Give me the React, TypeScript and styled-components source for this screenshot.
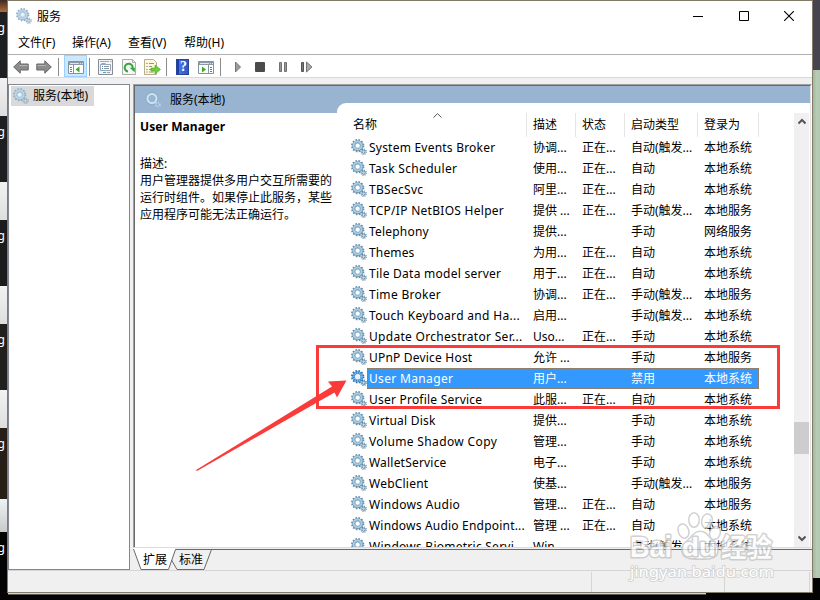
import React from 'react';
import styled, { createGlobalStyle, css } from 'styled-components';

const Global = createGlobalStyle`
  *, *::before, *::after { box-sizing: border-box; }
  html, body { margin: 0; padding: 0; overflow: hidden; background: #000; }
  body {
    font-family: "Noto Sans", "Noto Sans CJK SC", sans-serif;
    font-size: 12px;
    line-height: 17px;
    color: #000;
  }
  svg { display: block; flex: none; }
`;

const Desktop = styled.div`
  position: relative;
  display: grid;
  grid-template-columns: 7px 806px 7px;
  grid-template-rows: 593px 7px;
  width: 820px;
  height: 600px;
  overflow: hidden;
  background: #030303;
`;

const LeftEdge = styled.div`
  display: flex;
  flex-direction: column;
  overflow: hidden;
`;

const Strip = styled.div<{ $h: number; $bg: string }>`
  height: ${p => p.$h}px;
  flex: none;
  background: ${p => p.$bg};
  color: #fff;
  display: flex;
  justify-content: flex-end;
  padding: 7px 2px 0 0;
  line-height: 17px;
  overflow: hidden;
`;

const RightEdge = styled.div`
  display: grid;
  grid-template-rows: 70px 508px 15px;
`;
const Slate = styled.div`background: #45444f;`;
const Green = styled.div`background: linear-gradient(90deg, #a2b89f, #b5cbb2 50%, #b3c8b0);`;

const BottomEdge = styled.div`
  grid-column: 2;
  height: 2px;
  width: 698px;
  margin-left: 1px;
  background: #d4d4d4;
  border-bottom: 1px solid #55555c;
`;

const Window = styled.div`
  display: flex;
  flex-direction: column;
  border: 1px solid #857a68;
  background: #f0f0f0;
  overflow: hidden;
`;

const TitleBar = styled.div`
  height: 30px;
  flex: none;
  display: flex;
  align-items: center;
  padding-left: 8px;
  background: #fff;
`;
const Title = styled.span`
  flex: 1;
  padding-left: 5px;
`;
const Caption = styled.button`
  width: 45.5px;
  height: 28px;
  border: 0;
  padding: 0;
  background: none;
  display: flex;
  align-items: center;
  justify-content: center;
`;

const MenuBar = styled.div`
  height: 24px;
  flex: none;
  display: flex;
  gap: 16px;
  padding: 3px 0 0 10px;
  background: #fff;
  border-bottom: 1px solid #b0b0b0;
`;
const MenuItem = styled.span<{ $w: number }>`
  width: ${p => p.$w}px;
  white-space: nowrap;
`;

const ToolBar = styled.div`
  height: 23px;
  flex: none;
  display: flex;
  align-items: center;
  background: #fff;
  border-bottom: 1px solid #d9d9d9;
`;
const Tool = styled.div<{ $w: number; $active?: boolean }>`
  width: ${p => p.$w}px;
  height: 22px;
  padding-top: 2px;
  display: flex;
  align-items: center;
  justify-content: center;
  ${p => p.$active && css`
    background: #cce8ff;
    border: 1px solid #99d1ff;
    padding-top: 2px;
  `}
`;
const Divider = styled.div<{ $l: number; $r: number }>`
  width: 1px;
  height: 18px;
  margin: 2px ${p => p.$r}px 0 ${p => p.$l}px;
  background: #8c8c8c;
`;

const Body = styled.div`
  height: 486px;
  flex: none;
  margin-top: 6px;
  display: flex;
`;
const Tree = styled.div`
  width: 122px;
  border: 1px solid #828790;
  background: #fff;
  padding: 1px 2px;
`;
const TreeItem = styled.div`
  width: 83px;
  height: 20px;
  display: flex;
  align-items: center;
  gap: 4px;
  padding: 0 0 1px 2px;
  background: #d9d9d9;
  white-space: nowrap;
`;

const Right = styled.div`
  width: 679px;
  margin-left: 3px;
  display: flex;
  flex-direction: column;
`;
const Pane = styled.div`
  height: 464px;
  border: 1px solid #a0a0a0;
  border-right-color: #fff;
  border-bottom-color: #dcdcdc;
`;
const PaneInner = styled.div`
  height: 462px;
  border: 1px solid #696969;
  border-right-color: #e3e3e3;
  border-bottom: 0;
  display: grid;
  grid-template-columns: 202px 473px;
  background: #fff;
`;
const Detail = styled.div`
  display: flex;
  flex-direction: column;
`;
const Banner = styled.div`
  height: 27px;
  display: flex;
  align-items: center;
  gap: 9px;
  padding-left: 10px;
  background: #99b4d1;
`;
const ServiceName = styled.div`
  padding: 5px 5px 0;
  font-weight: 700;
  letter-spacing: 0.08px;
`;
const Description = styled.div`
  padding: 20px 0 0 5px;
  white-space: nowrap;
`;
const ListSide = styled.div`
  background: #99b4d1;
  padding-top: 17px;
  overflow: hidden;
`;
const Card = styled.div`
  height: 444px;
  border-top-left-radius: 9px;
  background: #fff;
  display: flex;
  padding: 10px 1px 0 14px;
`;
const List = styled.div`
  width: 443px;
  height: 434px;
  overflow: hidden;
`;
const Header = styled.div`
  position: relative;
  display: grid;
  grid-template-columns: 176px 49px 49px 73px 61px;
  height: 24px;
`;
const HeaderCell = styled.div<{ $first?: boolean }>`
  height: 24px;
  padding: 3px 0 0 ${p => (p.$first ? 2 : 6)}px;
  border-right: 1px solid #e5e5e5;
`;
const SortMark = styled.div`
  position: absolute;
  left: 82px;
  top: 0;
`;
const Row = styled.div`
  display: grid;
  grid-template-columns: 16px 392px;
  height: 21px;
`;
const IconCell = styled.div`padding-top: 2px;`;
const Cells = styled.div<{ $selected?: boolean }>`
  display: grid;
  grid-template-columns: 160px 49px 49px 73px 61px;
  height: 21px;
  line-height: 22px;
  white-space: nowrap;
  outline-offset: -1px;
  ${p => p.$selected && css`
    background: #3399ff;
    color: #fff;
    outline: 1px dotted rgba(204, 102, 0, 0.6);
  `}
`;
const Name = styled.span<{ $ls: number }>`
  padding-left: 2px;
  letter-spacing: ${p => p.$ls}px;
`;
const Cell = styled.span`padding-left: 6px;`;

const ScrollBar = styled.div`
  width: 15px;
  height: 434px;
  background: #f0f0f0;
  display: flex;
  flex-direction: column;
  align-items: center;
`;
const ScrollArrow = styled.div`
  height: 17px;
  display: flex;
  align-items: center;
`;
const Thumb = styled.div`
  width: 15px;
  height: 32px;
  margin: 292px 0 76px;
  background: #cdcdcd;
`;

const Tabs = styled.div`
  position: relative;
  height: 22px;
`;
const TabShape = styled.svg`
  position: absolute;
  left: 0;
  top: 0;
`;
const TabLabels = styled.div`
  position: relative;
  display: flex;
  gap: 12px;
  padding: 3px 0 0 10px;
`;
const StatusBar = styled.div`
  height: 22px;
  display: flex;
  border-top: 1px solid #d5d5d5;
`;
const StatusCell = styled.div<{ $w: number }>`
  width: ${p => p.$w}px;
  margin-top: 1px;
  border-right: 1px solid #d5d5d5;
`;

const Annotation = styled.svg`
  position: absolute;
  left: 0;
  top: 0;
  pointer-events: none;
`;

function Gear({ pale = false }: { pale?: boolean }) {
  const dark = pale ? '#91aec5' : '#668ca8';
  const body = pale ? '#b9d7ea' : '#a5cde5';
  return (
    <svg width="16" height="16" viewBox="0 0 16 16" fill="none">
      <circle cx="6.7" cy="6.7" r="5.8" stroke={dark} strokeWidth="1.7" strokeDasharray="1.65 1.39" />
      <circle cx="6.7" cy="6.7" r="4.1" stroke={dark} strokeWidth="2.8" />
      <circle cx="6.6" cy="6.5" r="4" stroke={body} strokeWidth="2.1" />
      <circle cx="6.7" cy="6.7" r="2.5" fill={pale ? '#e9f1f7' : '#fff'} stroke={dark} strokeWidth=".6" />
      <circle cx="12.6" cy="12.7" r="2.6" stroke={dark} strokeWidth="1.3" strokeDasharray="1 1.04" />
      <circle cx="12.6" cy="12.7" r="1.6" fill="#cfe2ee" stroke={dark} strokeWidth="1" />
    </svg>
  );
}

function BlueGear() {
  return (
    <svg width="16" height="16" viewBox="0 0 16 16" fill="none">
      <circle cx="6.7" cy="6.7" r="5.8" stroke="#2d6ea8" strokeWidth="1.8" strokeDasharray="1.65 1.39" />
      <circle cx="6.7" cy="6.7" r="4.1" stroke="#3b86c8" strokeWidth="2.8" />
      <circle cx="6.7" cy="6.7" r="4.1" stroke="#8fc4ee" strokeWidth="1.8" strokeDasharray="1 1" />
      <circle cx="6.7" cy="6.7" r="2.3" fill="#e4f1fd" />
      <circle cx="12.6" cy="12.7" r="2.6" stroke="#2d6ea8" strokeWidth="1.3" strokeDasharray="1 1.04" />
      <circle cx="12.6" cy="12.7" r="1.6" fill="#cfe6fa" stroke="#3b86c8" />
    </svg>
  );
}

function BannerGear() {
  return (
    <svg width="16" height="16" viewBox="0 0 16 16" fill="none">
      <circle cx="7" cy="6.5" r="4.8" stroke="#86a9c4" strokeWidth="3" />
      <circle cx="7" cy="6.5" r="4.5" stroke="#cde5f2" strokeWidth="2" />
      <circle cx="12.8" cy="12.6" r="2" stroke="#b9d4e6" strokeWidth="1.8" strokeDasharray="1.2 .9" />
    </svg>
  );
}

function Arrow({ flip = false }: { flip?: boolean }) {
  return (
    <svg width="16" height="14" viewBox="0 0 16 14">
      <path
        d="M.7 7 7.2.8V4h8v6h-8v3.2Z"
        transform={flip ? 'matrix(-1 0 0 1 16 0)' : undefined}
        fill="#8d8d8d"
        stroke="#666"
        strokeWidth="1"
      />
      <path d={flip ? 'M1.5 5.5h8' : 'M6.5 5.5h8'} stroke="#b5b5b5" />
    </svg>
  );
}

function PanelIcon({ mirrored = false }: { mirrored?: boolean }) {
  return (
    <svg width="16" height="13" viewBox="0 0 16 13">
      <path fill="#fff" stroke="#8792a0" d="M.5.5h15v12H.5z" />
      <path fill="#8e99a8" d="M1 1h14v3H1z" />
      <path fill="#dfe5ec" d="M2 2h9v1H2zM12 2h1v1h-1zM14 2h1v1h-1z" />
      {mirrored ? (
        <>
          <path d="M10.5 4v8" stroke="#8792a0" />
          <path d="M12 6.5h2M12 8.5h2M12 10.5h2" stroke="#4a80c0" />
          <path d="M4 5.5v6L8 8.5Z" fill="#3daa24" />
        </>
      ) : (
        <>
          <path d="M5.5 4v8" stroke="#8792a0" />
          <path d="M2 6.5h2M2 8.5h2M2 10.5h2" stroke="#4a80c0" />
          <path d="M11.5 5.5v6l-4-3Z" fill="#3daa24" />
        </>
      )}
    </svg>
  );
}

function PropertiesIcon() {
  return (
    <svg width="15" height="16" viewBox="0 0 15 16">
      <path fill="#f2f4f6" stroke="#858d97" d="M.5.5h14v15H.5z" />
      <path d="M2 2.5h9M12 2.5h1.5" stroke="#a1abb5" />
      <path fill="#fff" stroke="#9aa5b1" d="M2.500 5.5h10v6h-10zM3.5 4.5h4" />
      <path d="M4 7.5h1M4 9.5h1" stroke="#3d86cc" />
      <path d="M6 7.5h5M6 9.5h5" stroke="#8a929c" />
      <path d="M5 13.5h3" stroke="#48a7d8" />
      <path d="M9 13.5h3" stroke="#9ba3ab" />
    </svg>
  );
}

function RefreshIcon() {
  return (
    <svg width="14" height="16" viewBox="0 0 14 16" fill="none">
      <path fill="#f7f7f7" stroke="#adadad" d="M.5.5h10l3 3v12H.5z" />
      <path d="M10.5.5v3h3" stroke="#adadad" />
      <path d="M6 12.600A4 4 0 1 1 10.600 9.500" stroke="#31a839" strokeWidth="2" />
      <path d="M7.500 8.800h5.300v4.500Z" fill="#31a839" />
    </svg>
  );
}

function ExportIcon() {
  return (
    <svg width="17" height="16" viewBox="0 0 17 16" fill="none">
      <path fill="#fdf9df" stroke="#b6ae8d" d="M.5.5h9l3 3v12H.5z" />
      <path d="M2.5 4.5h1M2.5 7.5h1M2.5 10.5h1M2.5 13h1" stroke="#655f50" />
      <path d="M5 4.5h5M5 7.5h3M5 10.5h3M5 13h5" stroke="#9b947d" />
      <path d="M7 9h4V6l5.5 4.5L11 15v-3H7Z" fill="#6dce3e" stroke="#43a922" strokeWidth=".6" />
    </svg>
  );
}

const HelpBox = styled.div`
  width: 13px;
  height: 16px;
  background: linear-gradient(90deg, #1f3fa8 0 2px, #4c75dc 2px, #2e55c4);
  border: 1px solid #27439c;
  color: #fff;
  font: 700 14px/14px "Liberation Serif", serif;
  text-align: center;
  padding-left: 2px;
`;

type Service = [string, string, string, string, string, number];
const sys = '本地系统';
const local = '本地服务';
const trig = '(触发...';
const services: Service[] = [
  ['System Events Broker', '协调...', '正在...', '自动' + trig, sys, 0.22],
  ['Task Scheduler', '使用...', '正在...', '自动', sys, 0.32],
  ['TBSecSvc', '阿里...', '正在...', '自动', sys, 0.3],
  ['TCP/IP NetBIOS Helper', '提供 ...', '正在...', '手动' + trig, local, 0.28],
  ['Telephony', '提供...', '', '手动', '网络服务', 0.2],
  ['Themes', '为用...', '正在...', '自动', sys, 0.15],
  ['Tile Data model server', '用于...', '正在...', '自动', sys, 0.26],
  ['Time Broker', '协调...', '正在...', '手动' + trig, local, 0.3],
  ['Touch Keyboard and Ha...', '启用...', '', '手动' + trig, sys, 0.32],
  ['Update Orchestrator Ser...', 'Uso...', '正在...', '手动', sys, 0.3],
  ['UPnP Device Host', '允许 ...', '', '手动', local, 0.2],
  ['User Manager', '用户...', '', '禁用', sys, 0.34],
  ['User Profile Service', '此服...', '正在...', '自动', sys, 0.22],
  ['Virtual Disk', '提供...', '', '手动', sys, 0.22],
  ['Volume Shadow Copy', '管理...', '', '手动', sys, 0.36],
  ['WalletService', '电子...', '', '手动', sys, 0.2],
  ['WebClient', '使基...', '', '手动' + trig, local, 0.22],
  ['Windows Audio', '管理...', '正在...', '自动', local, 0.3],
  ['Windows Audio Endpoint...', '管理 ...', '正在...', '自动', sys, 0.2],
  ['Windows Biometric Servi...', 'Win...', '', '自动' + trig, sys, 0.25],
];

const dark = '#1d1f22';
const light = 'linear-gradient(#f2f2f2, #dedede)';
const strips: { h: number; bg: string; text?: string }[] = [
  { h: 12, bg: 'linear-gradient(#3b2a22, #b5693a)' },
  { h: 66, bg: dark, text: 'g' },
  { h: 38, bg: light },
  { h: 66, bg: dark, text: 'g' },
  { h: 38, bg: light },
  { h: 66, bg: '#1b1c1d', text: 'ng' },
  { h: 38, bg: light },
  { h: 66, bg: '#22201e', text: 'g' },
  { h: 38, bg: light },
  { h: 71, bg: '#271f17', text: 'g' },
  { h: 33, bg: 'linear-gradient(#eef3f8, #c9c9c9)' },
  { h: 61, bg: '#030303', text: 'g' },
];

export default function App() {
  return (
    <>
      <Global />
      <Desktop>
        <LeftEdge>
          {strips.map((s, i) => (
            <Strip key={i} $h={s.h} $bg={s.bg}>{s.text}</Strip>
          ))}
        </LeftEdge>
        <Window>
          <TitleBar>
            <Gear pale />
            <Title>服务</Title>
            <Caption aria-label="minimize">
              <svg width="10" height="10"><path d="M0 5.5h10" stroke="#000" /></svg>
            </Caption>
            <Caption aria-label="maximize">
              <svg width="10" height="10"><path d="M.5.5h9v9h-9z" fill="none" stroke="#000" /></svg>
            </Caption>
            <Caption aria-label="close">
              <svg width="10" height="10"><path d="M0 0l10 10M10 0L0 10" stroke="#000" strokeWidth="1.1" /></svg>
            </Caption>
          </TitleBar>
          <MenuBar>
            <MenuItem $w={38}>文件(F)</MenuItem>
            <MenuItem $w={40}>操作(A)</MenuItem>
            <MenuItem $w={40}>查看(V)</MenuItem>
            <MenuItem $w={42}>帮助(H)</MenuItem>
          </MenuBar>
          <ToolBar>
            <Tool $w={26}><Arrow /></Tool>
            <Tool $w={20}><Arrow flip /></Tool>
            <Divider $l={4} $r={5} />
            <Tool $w={23} $active><PanelIcon /></Tool>
            <Divider $l={2} $r={4} />
            <Tool $w={23}><PropertiesIcon /></Tool>
            <Tool $w={24}><RefreshIcon /></Tool>
            <Tool $w={22}><ExportIcon /></Tool>
            <Divider $l={3} $r={4} />
            <Tool $w={23}><HelpBox>?</HelpBox></Tool>
            <Tool $w={24}><PanelIcon mirrored /></Tool>
            <Divider $l={2} $r={7} />
            <Tool $w={20}>
              <svg width="8" height="12"><path d="M1.5 1v10l5-5Z" fill="#9c9c9c" stroke="#777" /></svg>
            </Tool>
            <Tool $w={24}>
              <svg width="10" height="10"><rect width="10" height="10" rx="1" fill="#4b4b4b" /></svg>
            </Tool>
            <Tool $w={22}>
              <svg width="8" height="10"><path d="M.5.5h2v9h-2zM5.5.5h2v9h-2z" fill="#999" stroke="#707070" /></svg>
            </Tool>
            <Tool $w={26}>
              <svg width="12" height="12"><path d="M.5 1.5h2v9h-2z" fill="#777" stroke="#555" /><path d="M5.5 1v10l5.500-5Z" fill="#aaa" stroke="#777" /></svg>
            </Tool>
          </ToolBar>
          <Body>
            <Tree>
              <TreeItem><Gear pale />服务(本地)</TreeItem>
            </Tree>
            <Right>
              <Pane>
                <PaneInner>
                  <Detail>
                    <Banner><BannerGear />服务(本地)</Banner>
                    <ServiceName>User Manager</ServiceName>
                    <Description>
                      描述:<br />
                      用户管理器提供多用户交互所需要的<br />
                      运行时组件。如果停止此服务，某些<br />
                      应用程序可能无法正确运行。
                    </Description>
                  </Detail>
                  <ListSide>
                    <Card>
                      <List>
                        <Header>
                          <HeaderCell $first>名称</HeaderCell>
                          <HeaderCell>描述</HeaderCell>
                          <HeaderCell>状态</HeaderCell>
                          <HeaderCell>启动类型</HeaderCell>
                          <HeaderCell>登录为</HeaderCell>
                          <SortMark>
                            <svg width="9" height="5"><path d="M.5 4.500 4.500 .7l4 3.800" fill="none" stroke="#555" /></svg>
                          </SortMark>
                        </Header>
                        {services.map(([name, desc, state, start, logon, ls]) => {
                          const selected = name === 'User Manager';
                          return (
                            <Row key={name}>
                              <IconCell>{selected ? <BlueGear /> : <Gear />}</IconCell>
                              <Cells $selected={selected}>
                                <Name $ls={ls}>{name}</Name>
                                <Cell>{desc}</Cell>
                                <Cell>{state}</Cell>
                                <Cell>{start}</Cell>
                                <Cell>{logon}</Cell>
                              </Cells>
                            </Row>
                          );
                        })}
                      </List>
                      <ScrollBar>
                        <ScrollArrow>
                          <svg width="8" height="7"><path d="M.5 5.500 4 2l3.500 3.500" fill="none" stroke="#555" strokeWidth="2" /></svg>
                        </ScrollArrow>
                        <Thumb />
                        <ScrollArrow>
                          <svg width="8" height="7"><path d="M.5 1.500 4 5l3.500-3.500" fill="none" stroke="#555" strokeWidth="2" /></svg>
                        </ScrollArrow>
                      </ScrollBar>
                    </Card>
                  </ListSide>
                </PaneInner>
              </Pane>
              <Tabs>
                <TabShape width="679" height="22" fill="none">
                  <path d="M0 0h42l-6 21H8Z" fill="#fff" />
                  <path d="M.5 1 8 21.500h27.500L42.500 1.500H679" stroke="#696969" />
                  <path d="M38.500 12 44 21.500h27L78.500 1.500" stroke="#696969" />
                </TabShape>
                <TabLabels><span>扩展</span><span>标准</span></TabLabels>
              </Tabs>
            </Right>
          </Body>
          <StatusBar>
            <StatusCell $w={584} />
            <StatusCell $w={133} />
            <StatusCell $w={85} />
          </StatusBar>
        </Window>
        <RightEdge><Slate /><Green /></RightEdge>
        <BottomEdge />
        <Annotation width="820" height="600" viewBox="0 0 820 600" fill="none">
          <rect x="317.500" y="346.500" width="461" height="61" stroke="#fb3a3a" strokeWidth="3" />
          <path d="M196 470 332 386.500 328 381.500 346.500 380.500 337 397.500 334.500 392.500 197 471Z" fill="#fb3a3a" />
          <g
            fontFamily='"Liberation Sans", "Noto Sans CJK SC", sans-serif'
            fill="#fff"
            stroke="#c2c2c2"
            strokeWidth="3"
            strokeLinejoin="round"
            paintOrder="stroke"
            opacity=".75"
          >
            <ellipse cx="683.500" cy="531" rx="4.500" ry="6.500" transform="rotate(-20 683.500 531)" />
            <ellipse cx="694" cy="520" rx="4.500" ry="6.500" />
            <ellipse cx="707" cy="521" rx="4.500" ry="6.500" transform="rotate(12 707 521)" />
            <ellipse cx="715" cy="533" rx="4.500" ry="6" transform="rotate(20 715 533)" />
            <path d="M700 532c-6 0-9 7-14 11s-5 14 4 15c5 .5 15 .5 20 0 9-1 9-11 4-15s-7-11-14-11Z" />
            <text x="630" y="557" fontSize="29" fontWeight="700" textLength="42" lengthAdjust="spacingAndGlyphs">Bai</text>
            <text x="682" y="556" fontSize="25" fontWeight="700" textLength="34" lengthAdjust="spacingAndGlyphs">du</text>
            <text x="721" y="557" fontSize="26" fontWeight="700" textLength="51" lengthAdjust="spacingAndGlyphs">经验</text>
          </g>
          <text
            x="630" y="577" fontSize="15" textLength="144" lengthAdjust="spacingAndGlyphs"
            fontFamily='"Noto Sans", sans-serif' fill="#fff" stroke="#cfcfcf" strokeWidth="1.600" paintOrder="stroke"
          >jingyan.baidu.com</text>
        </Annotation>
      </Desktop>
    </>
  );
}
